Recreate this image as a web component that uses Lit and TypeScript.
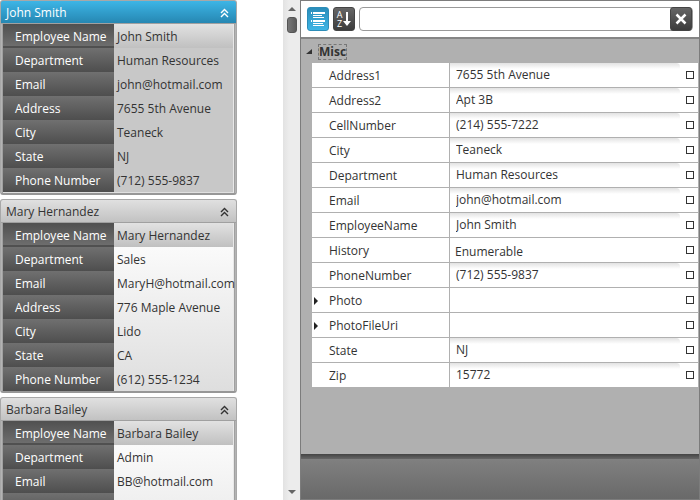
import { LitElement, html, css, nothing } from "lit";
import { customElement, property } from "lit/decorators.js";

type Employee = { fields: [string, string][]; active?: boolean };

const LABELS = ["Employee Name", "Department", "Email", "Address", "City", "State", "Phone Number"];

// Fields without a value keep an empty row, so every card has the same height.
const person = (values: string[], active = false): Employee => ({
  active,
  fields: LABELS.map((label, i) => (values[i] ? [label, values[i]] : ["", ""])),
});

const EMPLOYEES: Employee[] = [
  person(["John Smith", "Human Resources", "john@hotmail.com", "7655 5th Avenue", "Teaneck", "NJ", "(712) 555-9837"], true),
  person(["Mary Hernandez", "Sales", "MaryH@hotmail.com", "776 Maple Avenue", "Lido", "CA", "(612) 555-1234"]),
  person(["Barbara Bailey", "Admin", "BB@hotmail.com"]),
];

type Prop = { name: string; value?: string; kind: "text" | "static" | "object" };

const PROPS: Prop[] = [
  { name: "Address1", value: "7655 5th Avenue", kind: "text" },
  { name: "Address2", value: "Apt 3B", kind: "text" },
  { name: "CellNumber", value: "(214) 555-7222", kind: "text" },
  { name: "City", value: "Teaneck", kind: "text" },
  { name: "Department", value: "Human Resources", kind: "text" },
  { name: "Email", value: "john@hotmail.com", kind: "text" },
  { name: "EmployeeName", value: "John Smith", kind: "text" },
  { name: "History", value: "Enumerable", kind: "static" },
  { name: "PhoneNumber", value: "(712) 555-9837", kind: "text" },
  { name: "Photo", kind: "object" },
  { name: "PhotoFileUri", kind: "object" },
  { name: "State", value: "NJ", kind: "text" },
  { name: "Zip", value: "15772", kind: "text" },
];

const reset = css`
  * {
    box-sizing: border-box;
  }
  button,
  input {
    font: inherit;
    color: inherit;
    margin: 0;
    padding: 0;
    border: 0;
    background: none;
    outline: none;
  }
  svg {
    display: block;
  }
  table {
    border-collapse: separate;
    border-spacing: 0;
    table-layout: fixed;
    width: 100%;
  }
  th,
  td {
    padding: 0;
    text-align: left;
    font-weight: 400;
  }
`;

@customElement("employee-card")
class EmployeeCard extends LitElement {
  @property({ attribute: false }) employee!: Employee;

  static styles = [
    reset,
    css`
      :host {
        display: block;
        flex: none;
      }
      .card {
        border: 1px solid #a8a8a8;
        border-bottom: 2px solid #979797;
        border-radius: 3px;
        background: #a0a0a0;
      }
      .head {
        display: flex;
        align-items: center;
        justify-content: space-between;
        width: 100%;
        height: 22px;
        padding: 2px 7px 0 5px;
        border-radius: 2px 2px 0 0;
        background: linear-gradient(#e0e0e0, #c2c2c2);
        text-align: left;
      }
      .active .head {
        color: #fff;
        background: linear-gradient(#3db5e6, #2687b2);
      }
      .body {
        margin: 1px 0 0;
        padding: 0 1px;
        border: 0 solid #b4b4b4;
        border-width: 0 1px;
      }
      .fields {
        background: linear-gradient(#fff, #dedede);
        border-right: 1px solid #e8e8e8;
      }
      .active .fields {
        background: #c8c8c8;
        border-bottom: 1px solid #e0e0e0;
      }
      tr {
        height: 24px;
      }
      th,
      td {
        padding-top: 2px;
      }
      th {
        width: 111px;
        padding-left: 12px;
        color: #fff;
        background: linear-gradient(#707070, #4e4e4e);
      }
      tr:first-child th {
        background: linear-gradient(#505050, #707070);
        box-shadow: inset 0 -2px #505050;
      }
      td {
        padding-left: 3px;
        white-space: nowrap;
      }
      tr:first-child td {
        background: linear-gradient(#e2e2e2, #c0c0c0);
      }
    `,
  ];

  render() {
    const { fields, active } = this.employee;
    return html`<article class="card ${active ? "active" : ""}">
      <button class="head" aria-expanded="true">
        <span>${fields[0][1]}</span>
        <svg width="9" height="10" viewBox="0 0 9 10" fill="none" stroke="currentColor" stroke-width="1.4">
          <path d="M1 5 4.500 1.500 8 5M1 9 4.500 5.500 8 9" />
        </svg>
      </button>
      <div class="body">
        <table class="fields">
          ${fields.map(([label, value]) => html`<tr><th scope="row">${label}</th><td>${value}</td></tr>`)}
        </table>
      </div>
    </article>`;
  }
}

@customElement("property-grid")
class PropertyGrid extends LitElement {
  static styles = [
    reset,
    css`
      :host {
        display: flex;
        flex-direction: column;
        flex: 1;
        min-width: 0;
        border: 1px solid #7c7c7c;
        background: #b0b0b0;
      }
      .toolbar {
        display: flex;
        align-items: center;
        gap: 4px;
        height: 38px;
        padding: 0 6px;
        background: #fff;
        border-bottom: 2px solid #858585;
      }
      .tool {
        display: grid;
        place-items: center;
        flex: none;
        width: 22px;
        height: 24px;
        border-radius: 3px;
        color: #fff;
        background: linear-gradient(#666, #3c3c3c);
        border: 1px solid #444;
      }
      .on {
        background: linear-gradient(#2a8dba, #3db5e6);
        border-color: #2c8db8;
      }
      .glyph {
        font-size: 9px;
        line-height: 9px;
      }
      .letters {
        display: flex;
        align-items: center;
        gap: 1px;
      }
      .search {
        display: flex;
        flex: 1;
        min-width: 0;
        height: 24px;
        border: 1px solid #999;
        border-radius: 4px;
        align-items: center;
      }
      .search input {
        flex: 1;
        min-width: 0;
        padding: 0 6px;
      }
      .group {
        display: flex;
        align-items: center;
        gap: 7px;
        height: 24px;
        padding: 2px 0 0 5px;
        font-weight: 700;
      }
      .group span {
        line-height: 14px;
        outline: 1px dashed #777;
      }
      .rows {
        padding: 0 1px 0 11px;
        flex: 1;
      }
      tr {
        height: 25px;
      }
      th,
      td {
        height: 25px;
        background: #fff;
        border-bottom: 1px solid #b0b0b0;
      }
      th {
        width: 138px;
        border-right: 1px solid #b0b0b0;
      }
      .name {
        display: flex;
        align-items: center;
        height: 24px;
        padding: 2px 0 0 2px;
      }
      .twist {
        width: 15px;
      }
      .cell {
        display: flex;
        align-items: center;
        justify-content: space-between;
        height: 24px;
        padding-right: 4px;
      }
      .cell input {
        flex: 1;
        min-width: 0;
        height: 24px;
        padding: 0 6px 2px;
        margin-right: 6px;
        background: linear-gradient(#e2e2e2, #fff 6px);
        border-top-right-radius: 4px;
      }
      .static {
        padding: 4px 0 0 5px;
      }
      .marker {
        flex: none;
        width: 8px;
        height: 8px;
        border: 1px solid #333;
      }
      .footer {
        height: 45px;
        background: linear-gradient(#444, #666 5px, #808080 5px, #696969);
      }
    `,
  ];

  render() {
    return html`
      <div class="toolbar">
        <button class="tool on" aria-label="Group by category">
          <svg width="14" height="14" viewBox="0 0 14 14" fill="#fff">
            <path d="M0 0h1v2H0zM2 0h12v2H2zM2 3h9v1H2zM2 5h11v1H2zM0 8h1v2H0zM2 8h12v2H2zM2 11h10v1H2zM2 13h11v1H2z" />
          </svg>
        </button>
        <button class="tool" aria-label="Sort alphabetically">
          <span class="letters">
            <span class="glyph">A<br />Z</span>
            <svg width="8" height="14" viewBox="0 0 8 14" fill="#fff"><path d="M3 0h2v9h3l-4 5-4-5h3z" /></svg>
          </span>
        </button>
        <div class="search">
          <input type="text" aria-label="Search" />
          <button class="tool" aria-label="Clear">
            <svg width="12" height="12" viewBox="0 0 12 12" stroke="#fff" stroke-width="2.500"><path d="M1.500 1.500l9 9M10.500 1.500l-9 9" /></svg>
          </button>
        </div>
      </div>
      <div class="group">
        <svg width="6" height="6" viewBox="0 0 6 6" fill="#333"><path d="M6 0v5H0z" /></svg>
        <span>Misc</span>
      </div>
      <div class="rows">
        <table>
          ${PROPS.map(
            (p) => html`<tr>
              <th scope="row">
                <div class="name">
                  <span class="twist">${p.kind === "object"
                    ? html`<svg width="5" height="8" viewBox="0 0 5 8" fill="#222"><path d="M0 0l4 4-4 4z" /></svg>`
                    : nothing}</span>
                  <label for=${p.name}>${p.name}</label>
                </div>
              </th>
              <td>
                <div class="cell">
                  ${p.kind === "text"
                    ? html`<input id=${p.name} type="text" .value=${p.value ?? ""} />`
                    : html`<output id=${p.name} class="static">${p.value ?? ""}</output>`}
                  <button class="marker" aria-label="Options for ${p.name}"></button>
                </div>
              </td>
            </tr>`
          )}
        </table>
      </div>
      <div class="footer"></div>
    `;
  }
}

@customElement("app-root")
class AppRoot extends LitElement {
  static styles = [
    reset,
    css`
      :host {
        display: flex;
        height: 100vh;
        overflow: hidden;
        background: #fff;
        color: #333;
        font: 12px/16px "Open Sans", "Noto Sans", sans-serif;
      }
      .list {
        display: flex;
        flex-direction: column;
        gap: 4px;
        flex: none;
        width: 283px;
        padding-right: 46px;
        overflow: hidden;
      }
      .scroll {
        display: flex;
        flex-direction: column;
        align-items: center;
        flex: none;
        width: 17px;
        padding: 7px 0 6px;
        background: linear-gradient(90deg, #e2e2e2, #ececec 6px);
      }
      .thumb {
        width: 10px;
        height: 16px;
        margin-top: 6px;
        border-radius: 3px;
        border: 1px solid #555;
        background: linear-gradient(90deg, #777, #5a5a5a);
      }
      .down {
        margin-top: auto;
      }
    `,
  ];

  render() {
    return html`
      <div class="list">${EMPLOYEES.map((e) => html`<employee-card .employee=${e}></employee-card>`)}</div>
      <div class="scroll">
        <svg width="8" height="4" viewBox="0 0 8 4" fill="#666"><path d="M0 4l4-4 4 4z" /></svg>
        <div class="thumb"></div>
        <svg class="down" width="8" height="4" viewBox="0 0 8 4" fill="#666"><path d="M0 0l4 4 4-4z" /></svg>
      </div>
      <property-grid></property-grid>
    `;
  }
}
